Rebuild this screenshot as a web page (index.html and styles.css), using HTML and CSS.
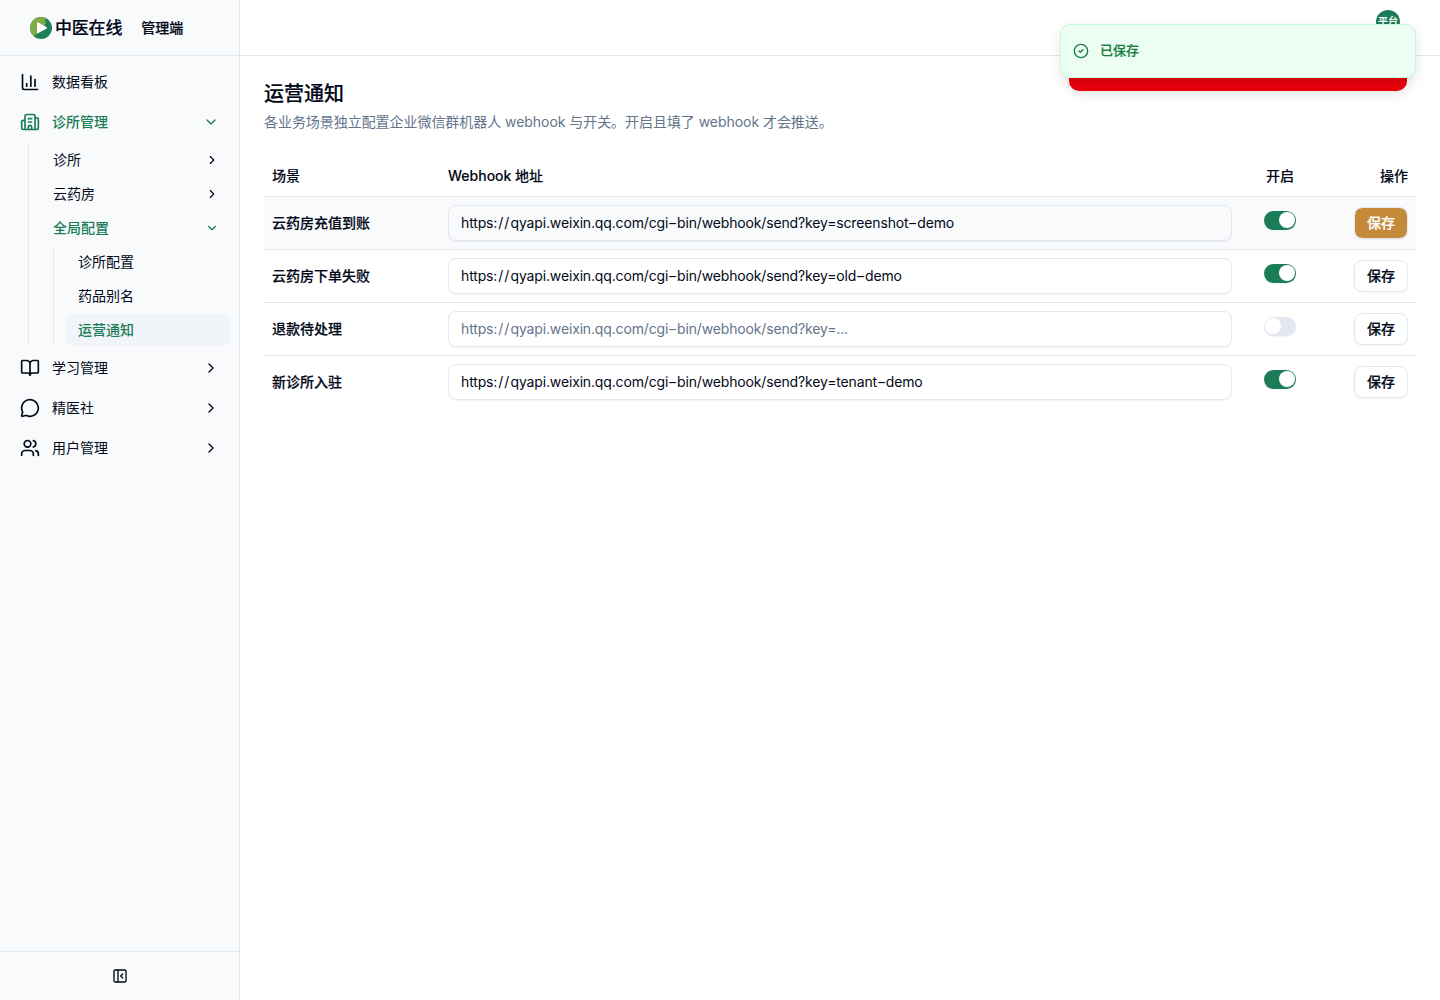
FILE: index.html
```html
<!DOCTYPE html>
<html lang="zh-CN">
<head>
<meta charset="utf-8">
<title>运营通知</title>
<link rel="stylesheet" href="styles.css">
</head>
<body>
<svg class="defs" aria-hidden="true">
  <symbol id="right" viewBox="0 0 24 24"><path d="m9 18 6-6-6-6"/></symbol>
  <symbol id="down" viewBox="0 0 24 24"><path d="m6 9 6 6 6-6"/></symbol>
</svg>
<div class="app">
  <aside class="sidebar">
    <header class="brand">
      <svg class="logo" viewBox="0 0 22 22">
        <circle cx="11" cy="11" r="11" fill="#1e7f58"/>
        <path d="M4 19.480A11 11 0 0 1 16 1.200C14.800 3 14.800 4.800 16 6.500L8 16.500C6 16.500 5 17.500 4 19.480Z" fill="#82ad45"/>
        <path d="M8.200 5.400Q7 4.800 7 6.200V15.200Q7 16.600 8.300 16L16.400 11.700Q17.800 10.900 16.400 10Z" fill="#fff"/>
      </svg>
      <span class="brand-name">中医在线</span>
      <span class="brand-role">管理端</span>
    </header>
    <nav class="nav">
      <a class="item"><svg class="icon" viewBox="0 0 24 24"><path d="M3 3v16a2 2 0 0 0 2 2h16M18 17V9M13 17V5M8 17v-3"/></svg><span>数据看板</span></a>
      <a class="item on"><svg class="icon" viewBox="0 0 24 24"><path d="M10 12h4M10 8h4M14 21v-3a2 2 0 0 0-4 0v3M6 10H4a2 2 0 0 0-2 2v7a2 2 0 0 0 2 2h16a2 2 0 0 0 2-2V9a2 2 0 0 0-2-2h-2M6 21V5a2 2 0 0 1 2-2h8a2 2 0 0 1 2 2v16"/></svg><span>诊所管理</span><svg class="chev"><use href="#down"/></svg></a>
      <div class="group">
        <a class="sub"><span>诊所</span><svg class="chev"><use href="#right"/></svg></a>
        <a class="sub"><span>云药房</span><svg class="chev"><use href="#right"/></svg></a>
        <a class="sub on"><span>全局配置</span><svg class="chev"><use href="#down"/></svg></a>
        <div class="leafs">
          <a class="leaf">诊所配置</a>
          <a class="leaf">药品别名</a>
          <a class="leaf current">运营通知</a>
        </div>
      </div>
      <a class="item"><svg class="icon" viewBox="0 0 24 24"><path d="M12 7v14M3 18a1 1 0 0 1-1-1V4a1 1 0 0 1 1-1h5a4 4 0 0 1 4 4 4 4 0 0 1 4-4h5a1 1 0 0 1 1 1v13a1 1 0 0 1-1 1h-6a3 3 0 0 0-3 3 3 3 0 0 0-3-3z"/></svg><span>学习管理</span><svg class="chev"><use href="#right"/></svg></a>
      <a class="item"><svg class="icon" viewBox="0 0 24 24"><path d="M2.992 16.342a2 2 0 0 1 .094 1.167l-1.065 3.290a1 1 0 0 0 1.236 1.168l3.413-.998a2 2 0 0 1 1.099.092 10 10 0 1 0-4.777-4.719"/></svg><span>精医社</span><svg class="chev"><use href="#right"/></svg></a>
      <a class="item"><svg class="icon" viewBox="0 0 24 24"><path d="M16 21v-2a4 4 0 0 0-4-4H6a4 4 0 0 0-4 4v2M16 3.128a4 4 0 0 1 0 7.744M22 21v-2a4 4 0 0 0-3-3.870"/><circle cx="9" cy="7" r="4"/></svg><span>用户管理</span><svg class="chev"><use href="#right"/></svg></a>
    </nav>
    <footer class="collapse">
      <svg class="icon" viewBox="0 0 24 24"><rect width="18" height="18" x="3" y="3" rx="2"/><path d="M9 3v18m7-6-3-3 3-3"/></svg>
    </footer>
  </aside>
  <div class="main">
    <header class="topbar"><span class="avatar">平台</span></header>
    <main class="content">
      <h1>运营通知</h1>
      <p class="lead">各业务场景独立配置企业微信群机器人 webhook 与开关。开启且填了 webhook 才会推送。</p>
      <table class="table">
        <colgroup><col class="c-scene"><col><col class="c-switch"><col class="c-action"></colgroup>
        <thead><tr><th>场景</th><th>Webhook 地址</th><th class="center">开启</th><th class="right">操作</th></tr></thead>
        <tbody>
          <tr class="hover"><td>云药房充值到账</td><td><div class="field">https:<b>//</b>qyapi.weixin.qq.com/cgi<i>-</i>bin/webhook/send?key=screenshot<i>-</i>demo</div></td><td><span class="switch checked"></span></td><td class="right"><button class="btn primary">保存</button></td></tr>
          <tr><td>云药房下单失败</td><td><div class="field">https:<b>//</b>qyapi.weixin.qq.com/cgi<i>-</i>bin/webhook/send?key=old<i>-</i>demo</div></td><td><span class="switch checked"></span></td><td class="right"><button class="btn">保存</button></td></tr>
          <tr><td>退款待处理</td><td><div class="field empty">https:<b>//</b>qyapi.weixin.qq.com/cgi<i>-</i>bin/webhook/send?key=...</div></td><td><span class="switch"></span></td><td class="right"><button class="btn">保存</button></td></tr>
          <tr><td>新诊所入驻</td><td><div class="field">https:<b>//</b>qyapi.weixin.qq.com/cgi<i>-</i>bin/webhook/send?key=tenant<i>-</i>demo</div></td><td><span class="switch checked"></span></td><td class="right"><button class="btn">保存</button></td></tr>
        </tbody>
      </table>
    </main>
  </div>
</div>
<div class="toasts">
  <div class="toast-back"></div>
  <div class="toast"><svg class="icon" viewBox="0 0 24 24"><circle cx="12" cy="12" r="10"/><path d="m9 12 2 2 4-4"/></svg><span>已保存</span></div>
</div>
</body>
</html>
```

FILE: styles.css
```css
* { box-sizing: border-box; }
body {
  margin: 0;
  font: 14px/20px Inter, "Noto Sans CJK SC", sans-serif;
  color: #020817;
  background: #fff;
}
.defs { position: absolute; width: 0; height: 0; }
svg { fill: none; stroke: currentColor; stroke-width: 2; stroke-linecap: round; stroke-linejoin: round; flex: none; }
.app { display: flex; height: 1000px; }

.sidebar { width: 240px; display: flex; flex-direction: column; background: #f8fafc; border-right: 1px solid #e2e8f0; }
.brand { height: 56px; display: flex; align-items: center; padding-left: 30px; border-bottom: 1px solid #e2e8f0; }
.logo { width: 22px; height: 22px; stroke: none; }
.brand-name { margin-left: 3px; font-size: 17px; font-weight: 500; letter-spacing: -.2px; }
.brand-role { margin-left: 19px; font-weight: 500; }
.brand-name, .brand-role, h1, tbody td:first-child, .btn, .toast, .avatar { -webkit-text-stroke: .2px currentColor; }
th { -webkit-text-stroke: .1px currentColor; }
.nav { flex: 1; padding: 6px 8px; }
.item { display: flex; align-items: center; gap: 12px; height: 40px; padding: 0 12px; }
.icon { width: 20px; height: 20px; }
.item span, .sub span { flex: 1; }
.chev { width: 16px; height: 16px; }
.on { color: #1b7d58; font-weight: 500; }
.group { margin: 2px 0 2px 20px; padding-left: 12px; border-left: 1px solid #e2e8f0; }
.sub { display: flex; align-items: center; height: 32px; margin-bottom: 2px; padding: 0 12px; }
.sub .chev { width: 14px; height: 14px; }
.leafs { margin-left: 12px; padding-left: 12px; border-left: 1px solid #e2e8f0; display: grid; gap: 2px; }
.leaf { height: 32px; padding: 6px 12px; border-radius: 8px; }
.current { color: #1b7d58; font-weight: 500; background: #f1f5f9; }
.collapse { height: 49px; border-top: 1px solid #e2e8f0; display: flex; align-items: center; justify-content: center; }
.collapse .icon { width: 16px; height: 16px; }

.main { flex: 1; min-width: 0; }
.topbar { height: 56px; border-bottom: 1px solid #e2e8f0; display: flex; justify-content: flex-end; padding: 10px 40px 0 0; }
.avatar { width: 24px; height: 24px; border-radius: 50%; background: #1b7d58; color: #fff; font-size: 10px; line-height: 23px; text-align: center; font-weight: 500; }
.content { padding: 24px; }
h1 { margin: 0; padding-top: 1px; font-size: 20px; line-height: 27px; font-weight: 500; }
.lead { margin: 4px 0 24px; color: #64748b; letter-spacing: -.05px; }
.table { width: 100%; table-layout: fixed; border-collapse: collapse; }
.c-scene { width: 176px; }
.c-switch { width: 80px; }
.c-action { width: 96px; }
th { height: 40px; padding: 0 8px; text-align: left; font-weight: 500; }
td { height: 53px; padding: 8px; font-weight: 500; }
tr { border-bottom: 1px solid #e2e8f0; }
tbody tr:last-child { border-bottom: 0; }
.hover { background: #f8fafc; }
.center { text-align: center; }
.right { text-align: right; }
.field { height: 36px; padding: 7px 12px; border: 1px solid #e2e8f0; border-radius: 8px; font-weight: 400; box-shadow: 0 1px 2px rgba(0,0,0,.05); white-space: nowrap; letter-spacing: -.15px; }
.field b { font-weight: 400; padding-left: 1px; letter-spacing: 1.1px; }
.field i { display: inline-block; width: 8.8px; text-align: center; font-style: normal; transform: scaleX(1.5); }
.empty { color: #64748b; }
.switch { display: block; width: 32px; height: 19px; margin: -5px auto 0; border-radius: 10px; background: #e2e8f0; padding: 1.500px 1px; box-shadow: 0 1px 2px rgba(0,0,0,.05); }
.switch::after { content: ""; display: block; width: 16px; height: 16px; border-radius: 50%; background: #fff; }
.checked { background: #1b7d58; }
.checked::after { margin-left: 14px; }
.btn { display: inline-block; vertical-align: middle; width: 54px; height: 32px; padding: 0; border: 1px solid #e2e8f0; border-radius: 8px; background: #fff; color: inherit; font: inherit; box-shadow: 0 1px 2px rgba(0,0,0,.05); }
.primary { background: #c48a3a; background-clip: padding-box; color: #fff; }

.toasts { position: absolute; top: 24px; right: 24px; width: 356px; height: 67px; }
.toast, .toast-back { position: absolute; border-radius: 10px; box-shadow: 0 4px 12px rgba(0,0,0,.1); }
.toast { inset: 0 0 13px; display: flex; align-items: center; gap: 11px; padding: 0 12px; border: 1px solid #bffcd9; background: #ecfdf3; color: #1b7d43; font-size: 13px; font-weight: 500; }
.toast span { padding-bottom: 2px; }
.toast .icon { width: 16px; height: 16px; }
.toast-back { inset: 20px 9px 0; background: #e7000b; }
```
